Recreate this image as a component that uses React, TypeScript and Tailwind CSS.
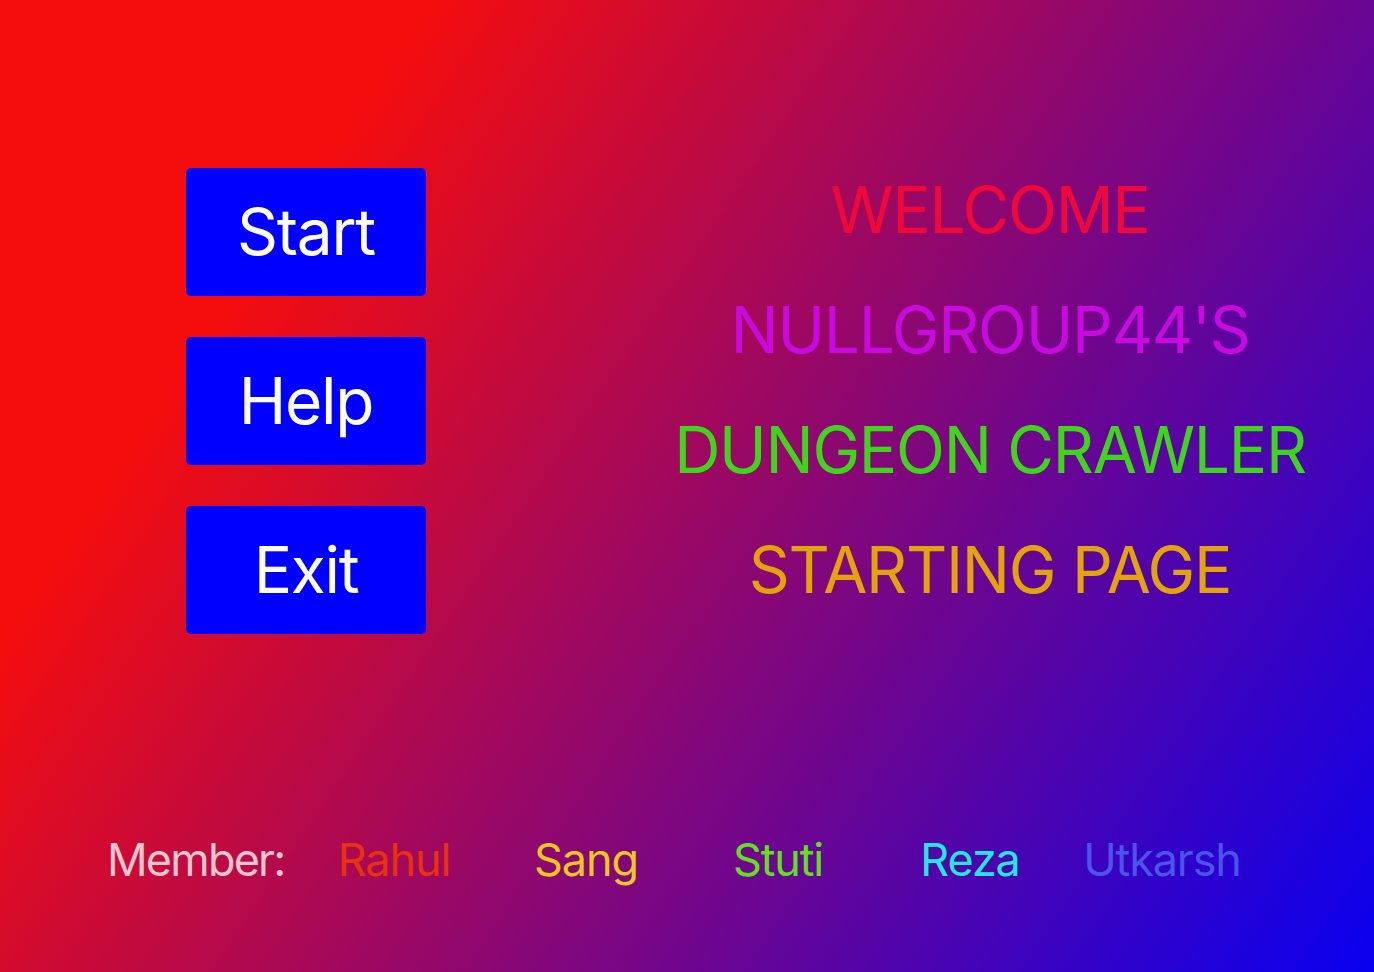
import { FC } from "react";

const buttons = ["Start", "Help", "Exit"];

const titles = [
  { text: "WELCOME", color: "text-[#f0083a]" },
  { text: "NULLGROUP44'S", color: "text-[#c80ae0]" },
  { text: "DUNGEON CRAWLER", color: "text-[#3ed61a]" },
  { text: "STARTING PAGE", color: "text-[#e2a408]" },
];

const members = [
  { name: "Rahul", color: "text-[#e8320c]" },
  { name: "Sang", color: "text-[#eac81e]" },
  { name: "Stuti", color: "text-[#5fe21c]" },
  { name: "Reza", color: "text-[#22e8e0]" },
  { name: "Utkarsh", color: "text-[#4a55e8]" },
];

const App: FC = () => {
  return (
    <main className="w-full h-[972px] flex flex-col bg-[linear-gradient(124deg,#f50d0d_21%,#0800f0_100%)] font-['Inter','Noto_Sans',sans-serif] overflow-hidden">
      <div className="flex">
        <div className="w-[612px] pt-[168px] flex flex-col items-center gap-[41px]">
          {buttons.map((b) => (
            <button
              key={b}
              className="w-[240px] h-[128px] bg-[#0000ff] rounded-[5px] text-white text-[64px] tracking-[-0.02em] flex items-center justify-center"
            >
              {b}
            </button>
          ))}
        </div>

        <div className="w-[756px] pt-[150px] flex flex-col items-center">
          {titles.map((t) => (
            <h1
              key={t.text}
              className={`text-[64px] leading-[120px] tracking-[-0.02em] ${t.color}`}
            >
              {t.text}
            </h1>
          ))}
        </div>
      </div>

      <div className="mt-auto mb-[82px] flex items-center pl-[107px] text-[45px] leading-[60px] tracking-[-0.025em]">
        <span className="w-[191px] text-[#f2c6d0] tracking-[-0.04em]">Member:</span>
        {members.map((m) => (
          <span key={m.name} className={`w-[192px] text-center ${m.color}`}>
            {m.name}
          </span>
        ))}
      </div>
    </main>
  );
};

export default App;
